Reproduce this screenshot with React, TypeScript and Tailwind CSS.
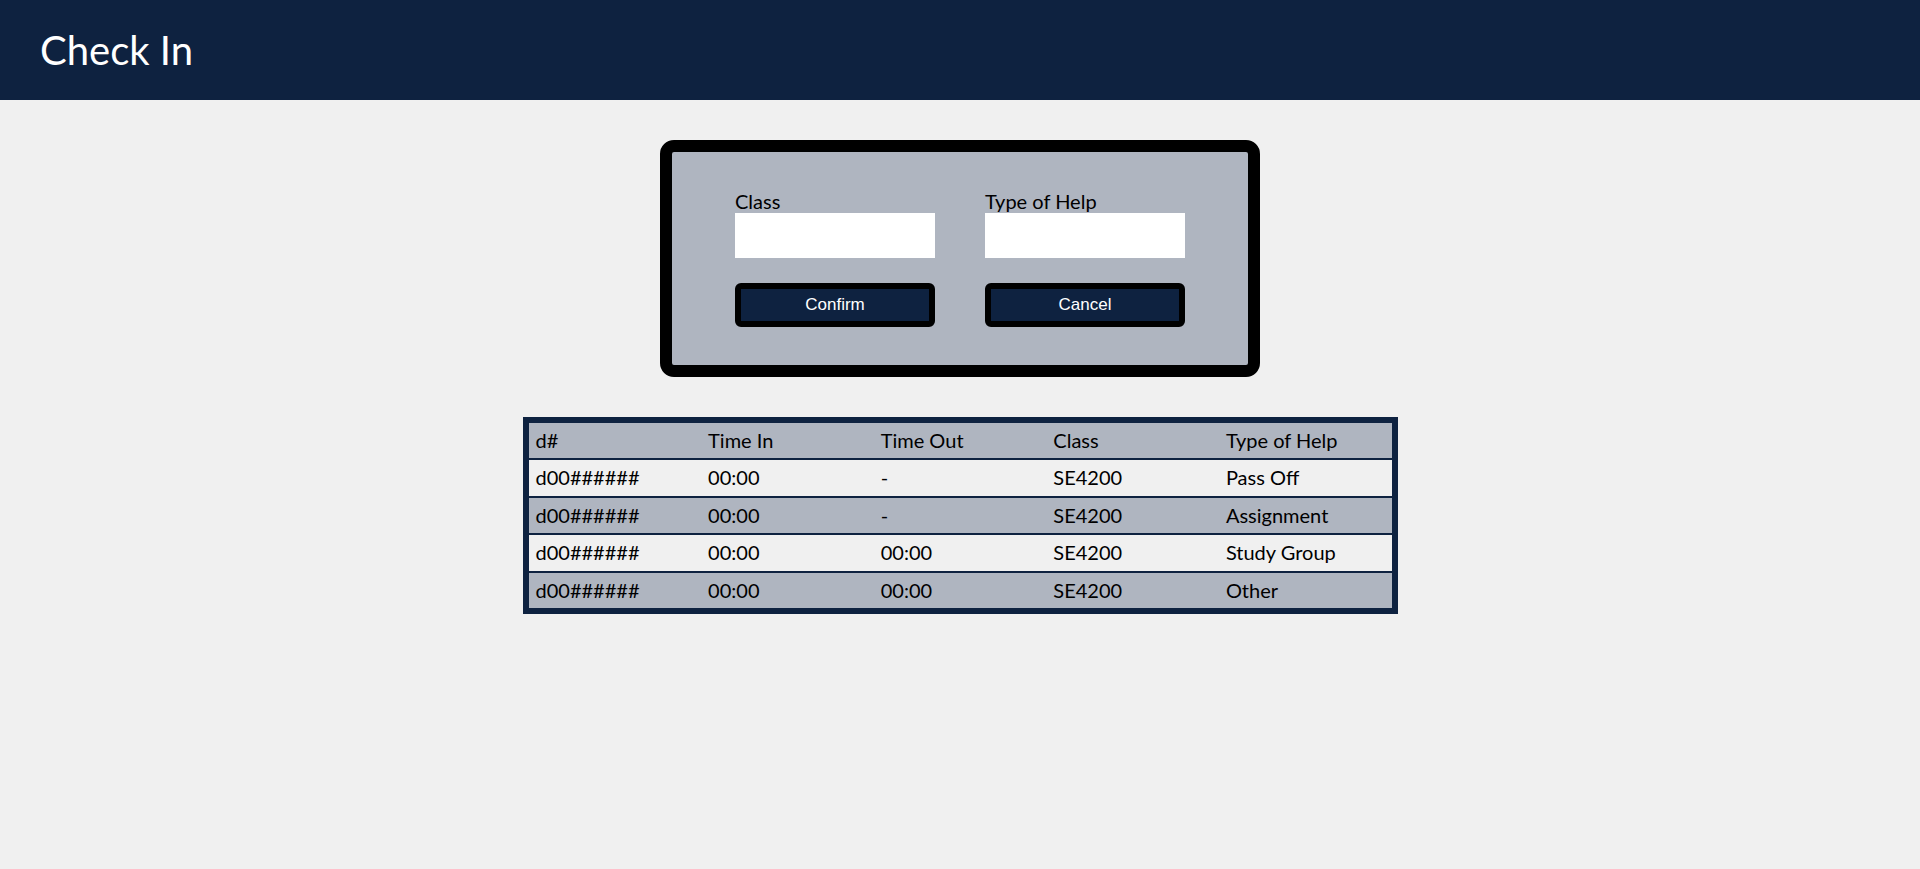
const ROWS = [
  { id: "d00######", timeIn: "00:00", timeOut: "-", course: "SE4200", help: "Pass Off" },
  { id: "d00######", timeIn: "00:00", timeOut: "-", course: "SE4200", help: "Assignment" },
  { id: "d00######", timeIn: "00:00", timeOut: "00:00", course: "SE4200", help: "Study Group" },
  { id: "d00######", timeIn: "00:00", timeOut: "00:00", course: "SE4200", help: "Other" },
];

function Field({ label }: { label: string }) {
  return (
    <div className="flex flex-col w-[200px]">
      <label className="text-[20px] leading-[24px] text-black">{label}</label>
      <input className="h-[45px] w-full bg-white outline-none" />
    </div>
  );
}

function ActionButton({ children }: { children: string }) {
  return (
    <button className="h-[44px] w-[200px] rounded-[6px] border-[6px] border-black bg-[#0e2240] text-white text-[17px] font-['Liberation_Sans',Arial,sans-serif]">
      {children}
    </button>
  );
}

export default function App() {
  return (
    <div className="min-h-[869px] bg-[#f0f0f0] font-['Lato',sans-serif] text-black">
      <header className="h-[100px] bg-[#0e2240] flex items-center px-[40px]">
        <h1 className="text-[40px] text-white">Check In</h1>
      </header>

      <main className="flex flex-col items-center pt-[40px] gap-[40px]">
        <section className="w-[600px] h-[237px] rounded-[14px] border-[12px] border-black bg-[#afb5c0] pt-[37px] px-[63px]">
          <div className="flex gap-[50px]">
            <Field label="Class" />
            <Field label="Type of Help" />
          </div>
          <div className="flex gap-[50px] mt-[25px]">
            <ActionButton>Confirm</ActionButton>
            <ActionButton>Cancel</ActionButton>
          </div>
        </section>

        <div className="w-[875px] bg-[#0e2240] p-[6px] flex flex-col gap-[2px] text-[20px] leading-[24px]">
          <div className="grid grid-cols-5 h-[35px] items-center bg-[#afb5c0] pb-[1px]">
            {["d#", "Time In", "Time Out", "Class", "Type of Help"].map((h) => (
              <div key={h} className="pl-[7px]">{h}</div>
            ))}
          </div>
          {ROWS.map((row, i) => (
            <div
              key={i}
              className={`grid grid-cols-5 h-[35.5px] items-center pb-[1px] ${i % 2 === 0 ? "bg-[#f0f0f0]" : "bg-[#afb5c0]"}`}
            >
              <div className="pl-[7px]">{row.id}</div>
              <div className="pl-[7px]">{row.timeIn}</div>
              <div className="pl-[7px]">{row.timeOut}</div>
              <div className="pl-[7px]">{row.course}</div>
              <div className="pl-[7px]">{row.help}</div>
            </div>
          ))}
        </div>
      </main>
    </div>
  );
}
